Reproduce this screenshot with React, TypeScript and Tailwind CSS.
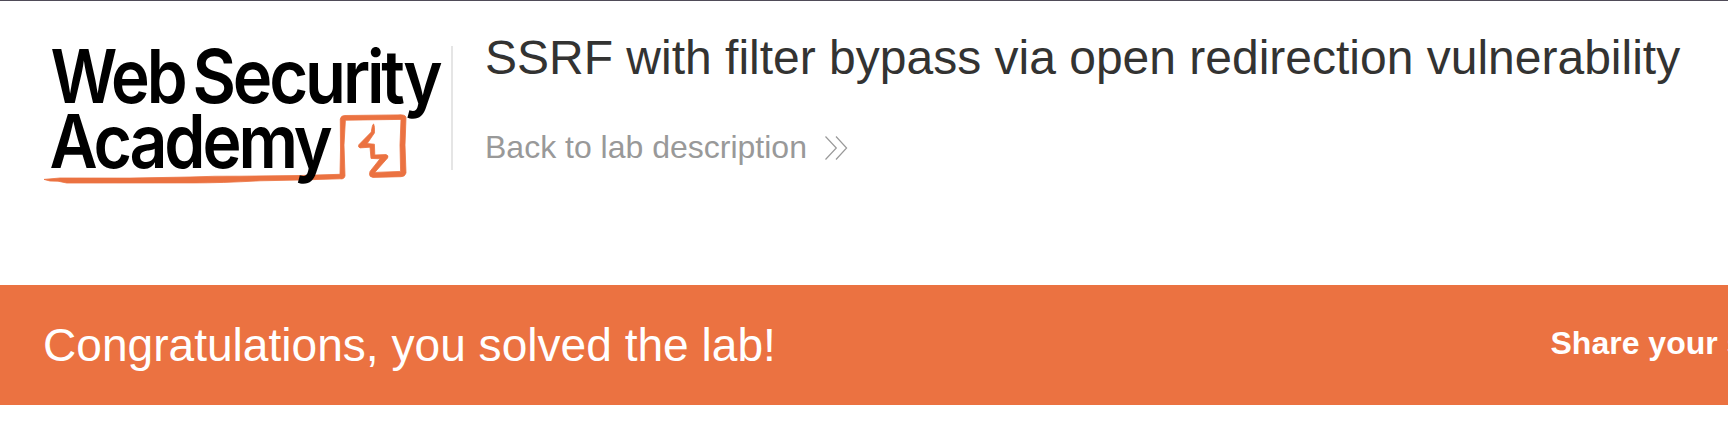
function AcademyLogo() {
  return (
    <svg
      className="block h-[146px] w-[404px] shrink-0 overflow-visible"
      viewBox="44 45 404 146"
      role="img"
      aria-label="Web Security Academy"
    >
      <path
        fill="#eb7241"
        d="M44 179.4 L60 178 L130 178.1 L190 177 Q215 175.9 240 176.2 L300 175.5 L340 174.3 L340.5 150 L340.3 119 Q341 115.3 345 115.5 L398 114.9 Q405.5 114.3 406 117.5 L405 145 L406 173 Q405 176.8 401 176.7 L373 177.4 Q369.3 177 369.5 174 L370 171.4 L380 158.8 L371 158.4 L370 147.2 L360 147.9 Q357.5 147 359 144.6 L371.3 132 Q372.3 124.3 373.6 124 Q374.9 126 374.4 133 L367.2 143.6 L374.4 144.2 L374.8 155 L386 154.6 Q389 155.5 387.6 158 L374.8 172.4 L400.6 171.4 L400 145 L401 119.4 L345.4 120.2 L344 145 L345 175.8 Q344.5 179.5 340 178.8 L300 180 L260 180.8 Q220 183 193 182.9 L66.7 183 L58 181.2 L50 181 Z"
        stroke="#eb7241"
        strokeWidth="0.8"
      />
      <g className="font-['Inter',sans-serif] text-[74px] font-semibold tracking-[-3.5px]" fill="#000">
        <text x="50.5" y="103.3" textLength="134" lengthAdjust="spacingAndGlyphs">Web</text>
        <text x="192.5" y="103.3" textLength="247" lengthAdjust="spacingAndGlyphs">Security</text>
        <text x="49.5" y="168.3" textLength="280" lengthAdjust="spacingAndGlyphs">Academy</text>
      </g>
    </svg>
  );
}

function DoubleChevron() {
  return (
    <svg
      className="h-6 w-6 shrink-0"
      viewBox="0 0 24 24"
      fill="none"
      stroke="#999"
      strokeWidth="1.2"
      aria-hidden="true"
    >
      <path d="M1.5 .5 12.3 12 1.5 23.5M12 .5 22.6 12 12 23.5" />
    </svg>
  );
}

export default function App() {
  return (
    <div className="h-[422px] w-full overflow-hidden border-t border-[#4f4b58] bg-white font-['Liberation_Sans',Arial,sans-serif]">
      <header className="flex h-[284px] items-start pl-[44px] pt-[44px]">
        <AcademyLogo />
        <div className="ml-[3px] mt-px h-[124px] w-[2px] shrink-0 bg-[#e5e5e5]" />
        <div className="-mt-[15px] ml-[32px] whitespace-nowrap">
          <h1 className="text-[48px] leading-[55px] text-[#333332]">
            SSRF with filter bypass via open redirection vulnerability
          </h1>
          <a href="#" className="mt-[44px] flex items-center gap-[17px] text-[32px] leading-[37px] text-[#999]">
            Back to lab description
            <DoubleChevron />
          </a>
        </div>
      </header>
      <section className="flex h-[120px] justify-between overflow-hidden whitespace-nowrap bg-[#eb7241] pl-[43px] text-white">
        <h2 className="mt-[34px] text-[46.1px] leading-[53px]">Congratulations, you solved the lab!</h2>
        <div className="mt-[40px] w-[177.5px] overflow-hidden text-[32px] font-bold leading-[37px]">
          Share your skills!
        </div>
      </section>
    </div>
  );
}
